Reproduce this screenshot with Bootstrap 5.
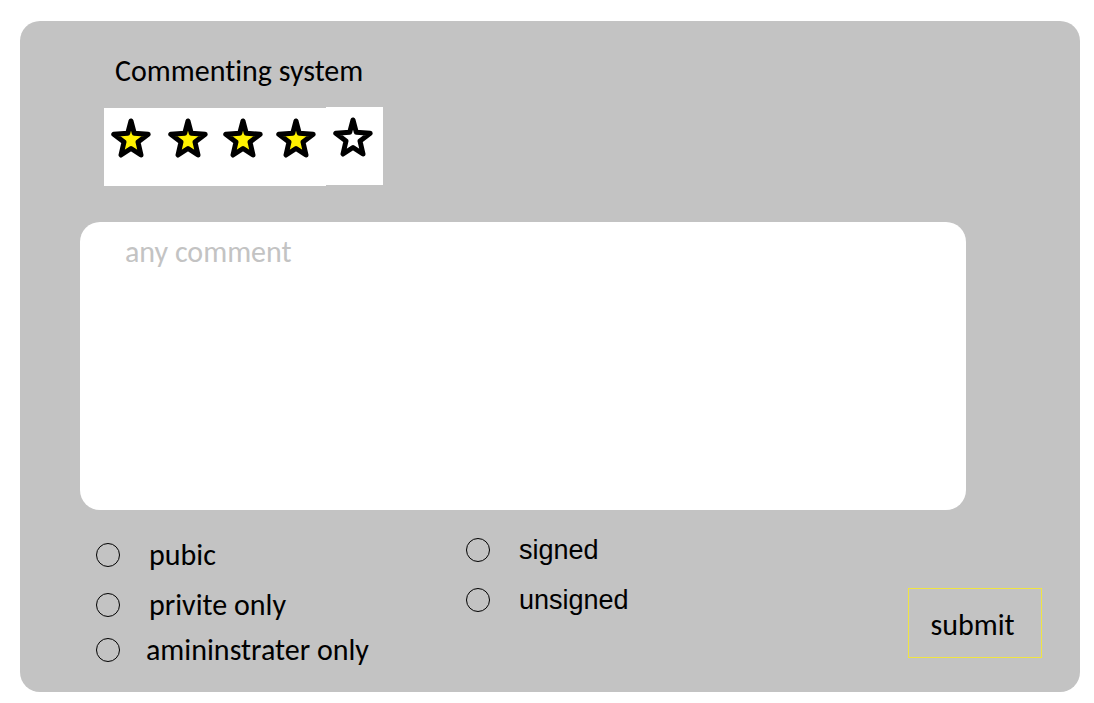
<!DOCTYPE html>
<html lang="en">
<head>
<meta charset="utf-8">
<meta name="viewport" content="width=device-width, initial-scale=1">
<title>Commenting system</title>
<link href="https://cdn.jsdelivr.net/npm/bootstrap@5.3.0/dist/css/bootstrap.min.css" rel="stylesheet">
<style>
  body { background: #fff; color: #000; font-family: Carlito, Lato, "Open Sans", sans-serif; font-size: 30px; line-height: 40px; font-variant-ligatures: none; padding: 21px 14px 11px 20px; }
  .panel { background: #c3c3c3; border-radius: 20px; padding: 30px 38px 22px 60px; }
  .panel-title { font-size: 30px; line-height: 40px; padding-left: 35px; }
  .rating { margin: 16px 0 36px 24px; }
  .rating-filled { display: grid; grid-template-columns: 57px 55px 53px 50px; width: 222px; height: 78px; padding: 10px 0 0 7px; margin-top: 1px; }
  .rating-empty { width: 57px; height: 78px; padding: 10px 0 0 7px; }
  .star { display: block; width: 40px; height: 40px; }
  .star svg { display: block; stroke: #000; stroke-width: 5; stroke-linejoin: round; }
  .comment { height: 288px; border-radius: 20px; margin-right: 76px; padding: 10px 45px; width: auto; font-size: 30px; line-height: 40px; resize: none; color: #000; }
  .comment::placeholder { color: #c3c3c3; opacity: 1; }
  .options { margin-top: 15px; }
  .who { width: 370px; padding: 5px 0 0 16px; }
  .sign { padding-left: 16px; font-family: "Liberation Sans", Arial, sans-serif; font-size: 27px; }
  .option-row { min-height: 50px; gap: 29px; }
  .option-row.closing { min-height: 40px; gap: 26px; }
  .option-row .form-check-input { width: 24px; height: 24px; border: 1px solid #000; background-color: transparent; margin: 0; }
  .submit, .submit:hover { width: 134px; height: 70px; border: 1px solid #f0e442; border-radius: 0; color: #000; font-size: 30px; padding: 2px 5px 0 0; margin-bottom: 12px; }
</style>
</head>
<body>
<svg width="0" height="0" class="position-absolute" aria-hidden="true">
  <symbol id="star" viewBox="0 0 40 40"><path d="M20 3 L23.300 15.300 L37.200 16.300 L27 24 L30 37 L20 30.500 L10 37 L13 24 L2.800 16.300 L16.700 15.300 Z"/></symbol>
</svg>
<main class="panel">
  <form>
    <h1 class="panel-title fw-normal mb-0">Commenting system</h1>
    <div class="rating d-flex" role="group" aria-label="Rating">
      <div class="rating-filled bg-white">
        <button type="button" class="star btn p-0 border-0" aria-label="1 star"><svg width="40" height="40" fill="#fff200"><use href="#star"/></svg></button>
        <button type="button" class="star btn p-0 border-0" aria-label="2 stars"><svg width="40" height="40" fill="#fff200"><use href="#star"/></svg></button>
        <button type="button" class="star btn p-0 border-0" aria-label="3 stars"><svg width="40" height="40" fill="#fff200"><use href="#star"/></svg></button>
        <button type="button" class="star btn p-0 border-0" aria-label="4 stars"><svg width="40" height="40" fill="#fff200"><use href="#star"/></svg></button>
      </div>
      <div class="rating-empty bg-white">
        <button type="button" class="star btn p-0 border-0" aria-label="5 stars"><svg width="40" height="40" fill="#fff"><use href="#star"/></svg></button>
      </div>
    </div>
    <div class="d-flex">
      <textarea class="comment form-control border-0 flex-grow-1" aria-label="Comment" placeholder="any comment"></textarea>
    </div>
    <div class="options d-flex">
      <div class="who">
        <div class="option-row d-flex align-items-center"><input class="form-check-input" type="radio" name="who" id="public"><label for="public">pubic</label></div>
        <div class="option-row d-flex align-items-center"><input class="form-check-input" type="radio" name="who" id="private"><label for="private">privite only</label></div>
        <div class="option-row closing d-flex align-items-center"><input class="form-check-input" type="radio" name="who" id="admin"><label for="admin">amininstrater only</label></div>
      </div>
      <div class="sign">
        <div class="option-row d-flex align-items-center"><input class="form-check-input" type="radio" name="sign" id="signed"><label for="signed">signed</label></div>
        <div class="option-row d-flex align-items-center"><input class="form-check-input" type="radio" name="sign" id="unsigned"><label for="unsigned">unsigned</label></div>
      </div>
      <button type="submit" class="submit btn ms-auto align-self-end">submit</button>
    </div>
  </form>
</main>
<script src="https://cdn.jsdelivr.net/npm/bootstrap@5.3.0/dist/js/bootstrap.bundle.min.js"></script>
</body>
</html>
